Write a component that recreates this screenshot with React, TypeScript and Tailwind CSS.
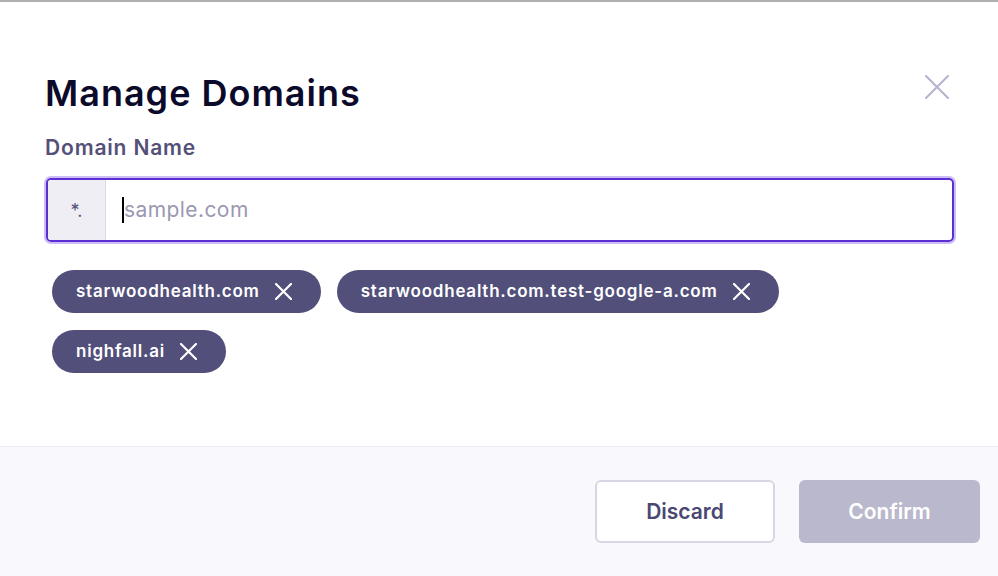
const domains = [
  "starwoodhealth.com",
  "starwoodhealth.com.test-google-a.com",
  "nighfall.ai",
];

function Cross({ size, stroke }: { size: number; stroke: number }) {
  return (
    <svg width={size} height={size} viewBox={`0 0 ${size} ${size}`} fill="none" stroke="currentColor" strokeWidth={stroke} strokeLinecap="round">
      <path d={`M1 1L${size - 1} ${size - 1}M${size - 1} 1L1 ${size - 1}`} />
    </svg>
  );
}

function DomainChip({ name }: { name: string }) {
  return (
    <div className="flex h-[43px] items-center gap-[15px] rounded-full bg-[#524f7a] pl-6 pr-[29px] text-[17px] font-semibold tracking-[0.045em] text-white">
      <span>{name}</span>
      <Cross size={17} stroke={2.2} />
    </div>
  );
}

export default function App() {
  return (
    <div
      className="flex h-[576px] w-[998px] flex-col border-t-2 border-[#b0b0b0] bg-white"
      style={{ fontFamily: "Inter, 'Open Sans', sans-serif" }}
    >
      <div className="relative flex-1 px-[45px] pt-[68px]">
        <button className="absolute right-[49px] top-[73px] text-[#b5b3cc]">
          <Cross size={24} stroke={2} />
        </button>
        <h1 className="text-[36px] font-semibold leading-[46px] tracking-[0.028em] text-[#0c0a2b]">Manage Domains</h1>
        <label className="mt-[19px] block text-[21px] font-semibold leading-[26px] tracking-[0.04em] text-[#545078]">
          Domain Name
        </label>
        <div className="mt-[17px] ml-[1px] flex h-[64px] w-[908px] overflow-hidden rounded-[5px] border-2 border-[#5b2fd4] ring-2 ring-[#cdbdf6]">
          <div className="flex w-[58px] items-center justify-center border-r border-[#dcdae6] bg-[#efeef4] text-[18px] text-[#545078]">
            *.
          </div>
          <div className="flex flex-1 items-center pl-4">
            <span className="h-[26px] w-[2px] bg-black" />
            <span className="text-[21px] tracking-[0.02em] text-[#9a98b2]">sample.com</span>
          </div>
        </div>
        <div className="mt-[28px] flex max-w-[860px] flex-wrap gap-x-4 gap-y-[17px] pl-[7px]">
          {domains.map((d) => (
            <DomainChip key={d} name={d} />
          ))}
        </div>
      </div>
      <div className="flex h-[130px] items-center justify-end gap-6 border-t border-[#ececf2] bg-[#f9f9fd] pr-[18px]">
        <button className="h-[63px] w-[180px] rounded-md border-2 border-[#d8d6e4] bg-white text-[21px] font-semibold text-[#4a4872]">
          Discard
        </button>
        <button className="h-[63px] w-[181px] rounded-md bg-[#b9b8cc] text-[21px] font-semibold text-white">
          Confirm
        </button>
      </div>
    </div>
  );
}
